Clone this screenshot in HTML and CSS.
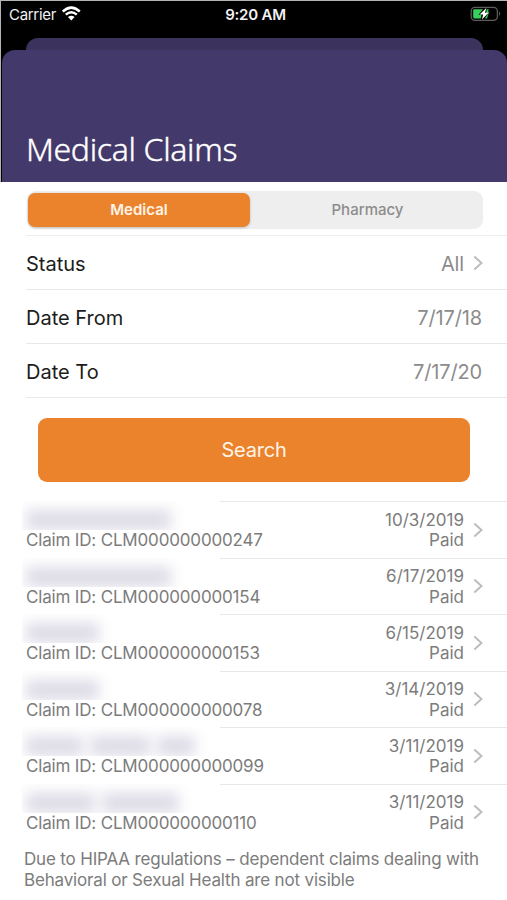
FILE: index.html
```
<!DOCTYPE html>
<html lang="en">
<head>
    <meta charset="UTF-8">
    <meta name="viewport" content="width=device-width, initial-scale=1.0">
    <title>Medical Claims</title>
    <link rel="stylesheet" href="styles.css">
</head>
<body>
    <div class="screen">
        <div class="top">
            <div class="status-bar">
                <div class="carrier">
                    <span class="carrier-name">Carrier</span>
                    <svg width="19" height="15" viewBox="0 0 19 15">
                        <path d="M.8 5.5Q9.3-2.3 17.8 5.5M3.8 8.6Q9.3 4 14.8 8.6" fill="none" stroke="#fff" stroke-width="2.5"/>
                        <path d="M6 11Q9.3 8.5 12.6 11L9.3 14.4Z" fill="#fff"/>
                    </svg>
                </div>
                <span class="time">9:20 AM</span>
                <svg class="battery" width="32" height="16" viewBox="0 0 32 16">
                    <rect x="1.2" y="1.4" width="26.2" height="13" rx="3.8" fill="none" stroke="#5c5c5c" stroke-width="1.3"/>
                    <path d="M29 5.3Q31.4 7.6 29 9.9Z" fill="#5c5c5c"/>
                    <path d="M4.5 3.2H13L8.5 8.8H11.6L10.8 12.4H4.5Q3.2 12.4 3.2 11.1V4.5Q3.2 3.2 4.5 3.2Z" fill="#35d15c"/>
                    <path d="M16.7 3.2H18.8L18 5.8H18.8V7L17 12.4H14.8L18.5 7.2H16Z" fill="#35d15c"/>
                    <path d="M16.3 2L9.6 8.4H13.2L11.9 13.6L18.7 6.8H15Z" fill="#fff"/>
                </svg>
            </div>
            <div class="card-behind"></div>
            <div class="header">
                <h1>Medical Claims</h1>
            </div>
        </div>

        <div class="tabs">
            <div class="tab active">Medical</div>
            <div class="tab">Pharmacy</div>
        </div>

        <div class="filters">
            <div class="filter">
                <span>Status</span>
                <span class="value">All</span>
                <svg class="chevron" width="10" height="16" viewBox="0 0 10 16"><path d="M1.3 1.5L8.5 8L1.3 14.5"/></svg>
            </div>
            <div class="filter">
                <span>Date From</span>
                <span class="value">7/17/18</span>
            </div>
            <div class="filter">
                <span>Date To</span>
                <span class="value">7/17/20</span>
            </div>
        </div>

        <button class="search">Search</button>

        <div class="claims">
            <div class="claim">
                <div class="info">
                    <div class="name"><i class="w-long"></i></div>
                    <div class="claim-id">Claim ID: CLM000000000247</div>
                </div>
                <div class="state"><div>10/3/2019</div><div>Paid</div></div>
                <svg class="chevron" width="10" height="16" viewBox="0 0 10 16"><path d="M1.3 1.5L8.5 8L1.3 14.5"/></svg>
            </div>
            <div class="claim">
                <div class="info">
                    <div class="name"><i class="w-long"></i></div>
                    <div class="claim-id">Claim ID: CLM000000000154</div>
                </div>
                <div class="state"><div>6/17/2019</div><div>Paid</div></div>
                <svg class="chevron" width="10" height="16" viewBox="0 0 10 16"><path d="M1.3 1.5L8.5 8L1.3 14.5"/></svg>
            </div>
            <div class="claim">
                <div class="info">
                    <div class="name"><i class="w-short"></i></div>
                    <div class="claim-id">Claim ID: CLM000000000153</div>
                </div>
                <div class="state"><div>6/15/2019</div><div>Paid</div></div>
                <svg class="chevron" width="10" height="16" viewBox="0 0 10 16"><path d="M1.3 1.5L8.5 8L1.3 14.5"/></svg>
            </div>
            <div class="claim">
                <div class="info">
                    <div class="name"><i class="w-short"></i></div>
                    <div class="claim-id">Claim ID: CLM000000000078</div>
                </div>
                <div class="state"><div>3/14/2019</div><div>Paid</div></div>
                <svg class="chevron" width="10" height="16" viewBox="0 0 10 16"><path d="M1.3 1.5L8.5 8L1.3 14.5"/></svg>
            </div>
            <div class="claim">
                <div class="info">
                    <div class="name"><i class="w-1"></i><i class="w-2"></i><i class="w-3"></i></div>
                    <div class="claim-id">Claim ID: CLM000000000099</div>
                </div>
                <div class="state"><div>3/11/2019</div><div>Paid</div></div>
                <svg class="chevron" width="10" height="16" viewBox="0 0 10 16"><path d="M1.3 1.5L8.5 8L1.3 14.5"/></svg>
            </div>
            <div class="claim">
                <div class="info">
                    <div class="name"><i class="w-4"></i><i class="w-5"></i></div>
                    <div class="claim-id">Claim ID: CLM000000000110</div>
                </div>
                <div class="state"><div>3/11/2019</div><div>Paid</div></div>
                <svg class="chevron" width="10" height="16" viewBox="0 0 10 16"><path d="M1.3 1.5L8.5 8L1.3 14.5"/></svg>
            </div>
        </div>

        <p class="note">Due to HIPAA regulations – dependent claims dealing with<br>Behavioral or Sexual Health are not visible</p>
    </div>
</body>
</html>
```
FILE: styles.css
```
* {
    box-sizing: border-box;
}
body {
    margin: 0;
    background-color: #fff;
    font-family: Inter, "Liberation Sans", sans-serif;
    color: #1c1c1c;
}
.screen {
    width: 507px;
    height: 900px;
    overflow: hidden;
}
.top {
    height: 182px;
    background-color: #000;
    border-top: 1px solid #b4b4b4;
    border-left: 1px solid #b4b4b4;
    display: flex;
    flex-direction: column;
}
.status-bar {
    height: 37px;
    display: grid;
    grid-template-columns: 1fr auto 1fr;
    padding: 5px 5px 0 8px;
    color: #f2f2f2;
    font-size: 15px;
    line-height: 17px;
}
.carrier {
    display: flex;
    gap: 6px;
}
.carrier-name {
    letter-spacing: -0.3px;
}
.time {
    font-weight: 600;
    letter-spacing: -0.2px;
}
.battery {
    justify-self: end;
}
.card-behind {
    height: 12px;
    margin: 0 24px 0 25px;
    background-color: #3c325e;
    border-radius: 12px 12px 0 0;
    box-shadow: 0 12px 0 #3c325e;
}
.header {
    flex: 1;
    display: flex;
    align-items: flex-end;
    margin-left: 1px;
    padding: 0 24px 11px;
    background-color: #43396a;
    border-radius: 13px 13px 0 0;
    z-index: 1;
}
h1 {
    margin: 0;
    font-family: "Noto Sans", sans-serif;
    font-size: 32px;
    font-weight: 300;
    line-height: 44px;
    letter-spacing: -0.35px;
    color: #fff;
    -webkit-text-stroke: 0.4px #fff;
}
.tabs {
    display: flex;
    height: 38px;
    margin: 9px 24px 6px 27px;
    padding: 2px 1px;
    background-color: #eee;
    border-radius: 9px;
}
.tab {
    flex: 1;
    display: flex;
    align-items: center;
    justify-content: center;
    padding: 0 0 1px 3px;
    font-size: 15px;
    font-weight: 500;
    color: #8c8c8c;
}
.tab.active {
    flex: 0 0 222px;
    padding-left: 0;
    background-color: #eb832d;
    border-radius: 7px;
    box-shadow: 0 1px 3px rgba(0, 0, 0, 0.2);
    color: #fff4e8;
    font-weight: 600;
}
.filters {
    margin-left: 26px;
    border-top: 1px solid #eee;
}
.filter {
    height: 54px;
    display: flex;
    align-items: center;
    padding: 2px 24px 0 0;
    border-bottom: 1px solid #e8e8e8;
    font-size: 20px;
}
.value {
    margin-left: auto;
    margin-right: 1px;
    letter-spacing: -0.15px;
    color: #8c8c8c;
}
.chevron {
    fill: none;
    stroke: #bdbdbd;
    stroke-width: 2;
}
.filter .chevron {
    margin: -2px 0 0 8px;
}
.search {
    display: block;
    width: 432px;
    height: 64px;
    margin: 20px 0 19px 38px;
    padding: 0;
    border: 0;
    border-radius: 9px;
    background-color: #eb832d;
    color: #fff4e8;
    font-family: inherit;
    font-size: 20px;
    letter-spacing: -0.2px;
}
.claim {
    height: 56.5px;
    display: flex;
    align-items: center;
    margin-left: 22px;
    padding-right: 24px;
    border-top: 1px solid #e8e8e8;
    font-size: 17px;
    line-height: 20.5px;
    color: #7c7c7c;
}
.info {
    flex: 1;
    align-self: flex-start;
    margin-top: -1px;
}
/* hidden patient names */
.name {
    width: 198px;
    height: 29.4px;
    display: flex;
    gap: 7px;
    padding: 9px 0 0 4px;
    overflow: hidden;
    background-color: #fff;
}
.name i {
    height: 20px;
    background-color: #dddbe6;
    filter: blur(7px);
}
.w-long {
    width: 145px;
}
.w-short {
    width: 73px;
}
.w-1 {
    width: 57px;
}
.w-2 {
    width: 60px;
}
.w-3 {
    width: 38px;
}
.w-4 {
    width: 69px;
}
.w-5 {
    width: 77px;
}
.claim-id {
    padding-left: 4px;
    letter-spacing: -0.17px;
}
.state {
    padding-top: 1.4px;
    text-align: right;
}
.claim .chevron {
    margin-left: 9px;
}
.note {
    margin: 9px 0 0 24px;
    font-size: 17px;
    line-height: 20.5px;
    letter-spacing: -0.17px;
    color: #7c7c7c;
}
```
